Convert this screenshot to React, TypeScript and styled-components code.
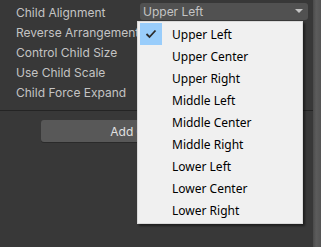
import React from 'react';
import styled, { createGlobalStyle } from 'styled-components';

const GlobalStyle = createGlobalStyle`
  html, body {
    margin: 0;
    padding: 0;
    background: #383838;
  }
`;

const Page = styled.div`
  display: flex;
  width: 321px;
  height: 247px;
  overflow: hidden;
  background: #383838;
`;

const Inspector = styled.div`
  position: relative;
  flex: 1;
  padding-top: 2px;
  font-family: Inter, "Liberation Sans", sans-serif;
  font-size: 12px;
`;

const Row = styled.div`
  display: flex;
  align-items: center;
  height: 20px;
  padding-left: 16px;
  padding-right: 5px;
`;

const Label = styled.div`
  width: 124px;
  flex-shrink: 0;
  color: #c4c4c4;
  white-space: nowrap;
  overflow: hidden;
`;

const Field = styled.div`
  flex: 1;
  height: 17px;
  margin-top: -2px;
  display: flex;
  align-items: center;
  justify-content: space-between;
  padding: 0 5px 0 3px;
  background: #515151;
  border-radius: 3px;
  color: #c4c4c4;
  box-sizing: border-box;
`;

const Arrow = styled.div`
  width: 0;
  height: 0;
  border-left: 4px solid transparent;
  border-right: 4px solid transparent;
  border-top: 4px solid #c4c4c4;
`;

const Separator = styled.div`
  margin-top: 8px;
  height: 1px;
  background: #242424;
`;

const ButtonRow = styled.div`
  display: flex;
  justify-content: center;
  margin-top: 9px;
`;

const Button = styled.div`
  width: 231px;
  height: 22px;
  display: flex;
  align-items: center;
  justify-content: center;
  background: #585858;
  border-radius: 3px;
  box-shadow: 0 1px 0 #2a2a2a;
  color: #e0e0e0;
`;

const Scrollbar = styled.div`
  width: 8px;
  background: linear-gradient(to right, #4a4a4a, #5c5c5c 40%, #545454);
`;

const Menu = styled.div`
  position: absolute;
  left: 137px;
  top: 21px;
  width: 166px;
  height: 203px;
  box-sizing: border-box;
  padding: 1px 2px;
  background: #f0f0f0;
  border: 1px solid #d9d9d9;
  box-shadow: 2px 2px 2px rgba(0, 0, 0, 0.45);
  font-family: "Noto Sans", "Liberation Sans", sans-serif;
  font-size: 12px;
`;

const Item = styled.div`
  display: flex;
  align-items: center;
  height: 22px;
  color: #000;
`;

const CheckBox = styled.div<{ $on?: boolean }>`
  width: 22px;
  height: 22px;
  margin-right: 10px;
  display: flex;
  align-items: center;
  justify-content: center;
  background: ${({ $on }) => ($on ? '#99cdfb' : 'transparent')};
`;

const options = [
  'Upper Left',
  'Upper Center',
  'Upper Right',
  'Middle Left',
  'Middle Center',
  'Middle Right',
  'Lower Left',
  'Lower Center',
  'Lower Right',
];

const labels = [
  'Child Alignment',
  'Reverse Arrangement',
  'Control Child Size',
  'Use Child Scale',
  'Child Force Expand',
];

export default function App() {
  return (
    <Page>
      <GlobalStyle />
      <Inspector>
        {labels.map((l, i) => (
          <Row key={l}>
            <Label>{l}</Label>
            {i === 0 && (
              <Field>
                <span>Upper Left</span>
                <Arrow />
              </Field>
            )}
          </Row>
        ))}
        <Separator />
        <ButtonRow>
          <Button>Add Component</Button>
        </ButtonRow>
        <Menu>
          {options.map((o, i) => (
            <Item key={o}>
              <CheckBox $on={i === 0}>
                {i === 0 && (
                  <svg width="12" height="10" viewBox="0 0 12 10">
                    <path d="M1.5 5 L4.5 8 L10.5 1.5" fill="none" stroke="#2b2b2b" strokeWidth="1.8" />
                  </svg>
                )}
              </CheckBox>
              {o}
            </Item>
          ))}
        </Menu>
      </Inspector>
      <Scrollbar />
    </Page>
  );
}
